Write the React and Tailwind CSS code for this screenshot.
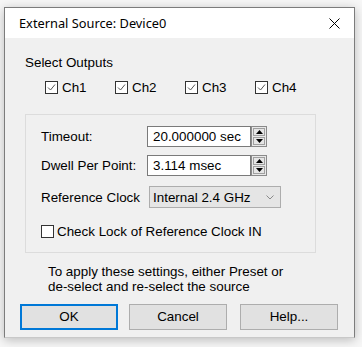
import React from 'react'

const sans = { fontFamily: '"Liberation Sans", Arial, sans-serif' }

function Check({ checked }) {
  return (
    <span className="w-[13px] h-[13px] border border-[#333] bg-white flex items-center justify-center shrink-0">
      {checked && (
        <svg width="9" height="9" viewBox="0 0 9 9">
          <path d="M1 4.5 L3.5 7 L8 1.5" fill="none" stroke="#555" strokeWidth="1" />
        </svg>
      )}
    </span>
  )
}

function Spinner() {
  return (
    <div className="w-[16px] h-[21px] border border-[#8a8a8a] bg-[#e8e8e8] flex flex-col p-[1px] gap-[1px]">
      <div className="flex-1 bg-[#e5e5e5] border border-[#a0a0a0] flex items-center justify-center">
        <svg width="7" height="4" viewBox="0 0 7 4"><path d="M0 4 L3.5 0 L7 4 Z" fill="#000" /></svg>
      </div>
      <div className="flex-1 bg-[#e5e5e5] border border-[#a0a0a0] flex items-center justify-center">
        <svg width="7" height="4" viewBox="0 0 7 4"><path d="M0 0 L3.5 4 L7 0 Z" fill="#000" /></svg>
      </div>
    </div>
  )
}

function NumField({ value }) {
  return (
    <div className="flex">
      <div className="w-[104px] h-[21px] border border-[#7a7a7a] bg-white flex items-center pl-[5px] text-black">
        {value}
      </div>
      <Spinner />
    </div>
  )
}

export default function App() {
  return (
    <div className="w-[362px] h-[347px] bg-[#f7f7f7] pl-[4px] pt-[7px]" style={sans}>
      <div className="w-[351px] h-[331px] border border-[#7c7c7c] border-b-[#c8c8c8] bg-[#f0f0f0] shadow-[0_2px_10px_rgba(0,0,0,0.25)] flex flex-col">
        <div className="h-[30px] bg-white flex items-center justify-between pl-[14px] pr-[10px]">
          <span className="text-[12.8px] text-black pt-[1px]" style={{ fontFamily: '"Noto Sans", "Open Sans", sans-serif' }}>
            External Source: Device0
          </span>
          <svg width="11" height="11" viewBox="0 0 11 11" className="mr-[4px]">
            <path d="M0.5 0.5 L10.5 10.5 M10.5 0.5 L0.5 10.5" stroke="#000" strokeWidth="1" />
          </svg>
        </div>

        <div className="flex flex-col pl-[20px] pt-[17px] text-[13.4px] text-black leading-[15px]">
          <div>Select Outputs</div>
          <div className="flex mt-[10px] pl-[20px]">
            {['Ch1', 'Ch2', 'Ch3', 'Ch4'].map((c) => (
              <div key={c} className="flex items-center gap-[4px] w-[70px]">
                <Check checked />
                <span>{c}</span>
              </div>
            ))}
          </div>

          <div className="mt-[19px] w-[291px] h-[139px] border border-[#dcdcdc] flex flex-col pl-[15px] pt-[11px]">
            <div className="flex items-center h-[21px]">
              <span className="w-[106px]">Timeout:</span>
              <NumField value="20.000000 sec" />
            </div>
            <div className="flex items-center h-[21px] mt-[8px]">
              <span className="w-[106px]">Dwell Per Point:</span>
              <NumField value="3.114 msec" />
            </div>
            <div className="flex items-center h-[22px] mt-[10px]">
              <span className="w-[108px]">Reference Clock</span>
              <div className="w-[132px] h-[22px] border border-[#adadad] bg-[#e5e5e5] flex items-center justify-between pl-[3px] pr-[6px]">
                <span>Internal 2.4 GHz</span>
                <svg width="8" height="5" viewBox="0 0 8 5"><path d="M0.5 0.5 L4 4 L7.5 0.5" fill="none" stroke="#8a8a8a" strokeWidth="1" /></svg>
              </div>
            </div>
            <div className="flex items-center gap-[3px] mt-[16px]">
              <Check />
              <span>Check Lock of Reference Clock IN</span>
            </div>
          </div>

          <div className="pl-[23px] mt-[11px]">
            <div>To apply these settings, either Preset or</div>
            <div>de-select and re-select the source</div>
          </div>
        </div>

        <div className="flex pl-[15px] mt-[10px] gap-[11px]">
          <button className="w-[98px] h-[26px] border-2 border-[#0078d7] bg-[#e1e1e1] text-[13.4px] text-black" style={sans}>OK</button>
          <button className="w-[98px] h-[26px] border border-[#adadad] bg-[#e1e1e1] text-[13.4px] text-black" style={sans}>Cancel</button>
          <button className="w-[98px] h-[26px] border border-[#adadad] bg-[#e1e1e1] text-[13.4px] text-black ml-[2px]" style={sans}>Help...</button>
        </div>
      </div>
    </div>
  )
}
